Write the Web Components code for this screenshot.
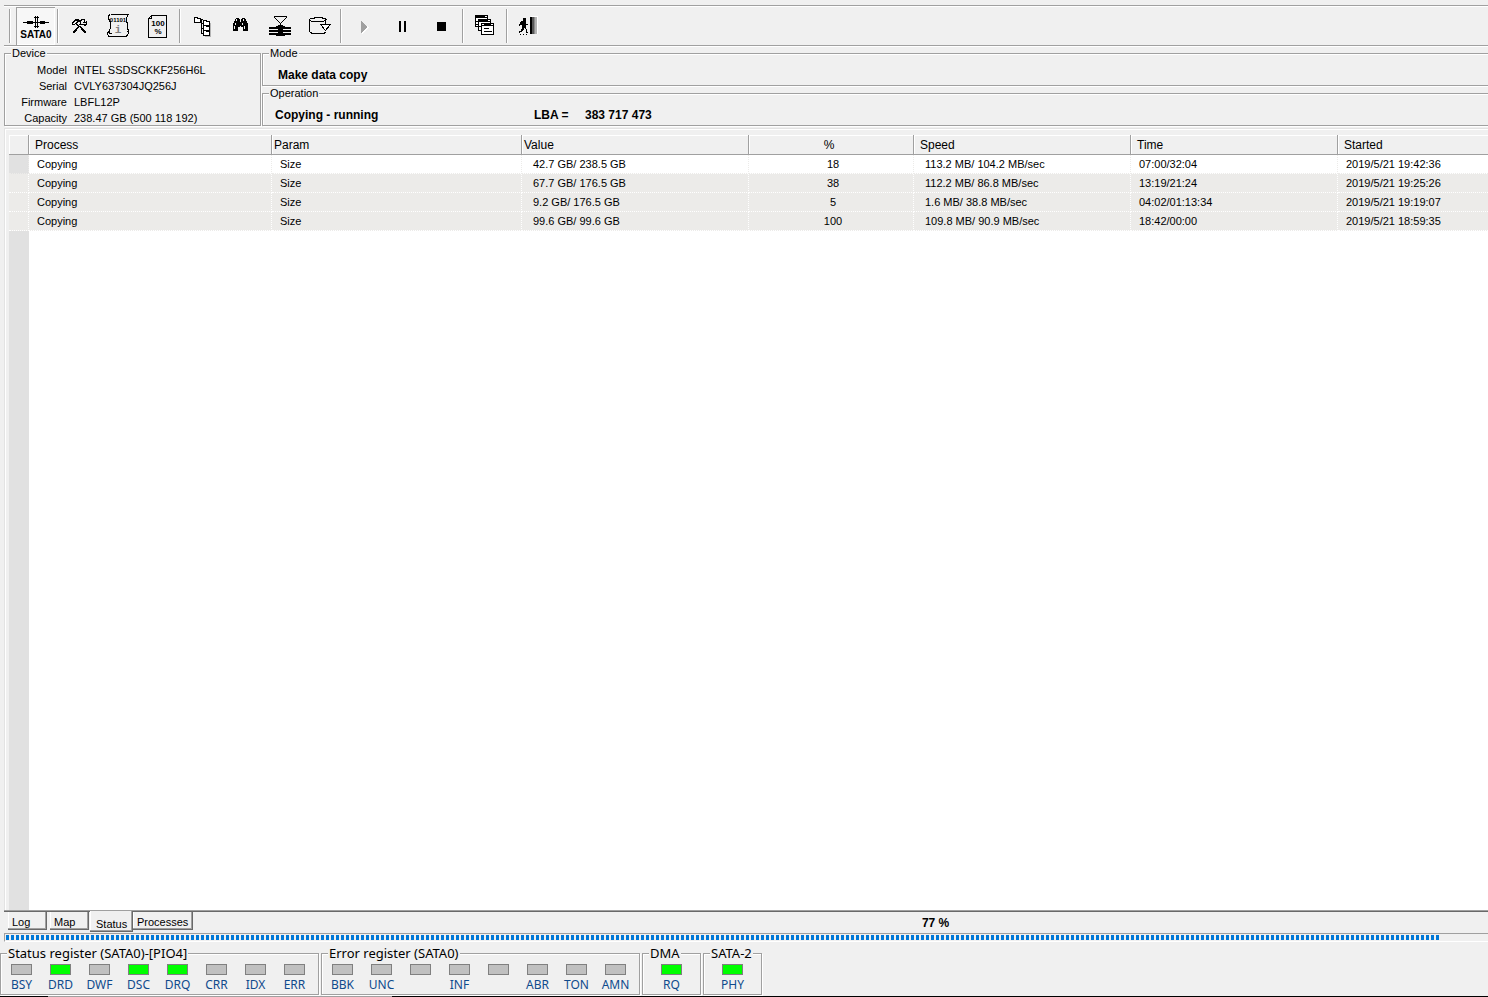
<!DOCTYPE html>
<html lang="en">
<head>
<meta charset="utf-8">
<title>Disk utility - Make data copy</title>
<style>
  html, body { margin: 0; height: 100%; }
  body {
    --face: #f0f0f0; --shade: #a0a0a0; --dark: #696969; --light: #ffffff;
    --ui: "Liberation Sans", Arial, sans-serif;
    --reg: "Noto Sans", "Open Sans", sans-serif;
    background: var(--face); color: #000; font: 11px/16px var(--ui); overflow: hidden;
  }
</style>
</head>
<body>
<disk-app></disk-app>
<script>
const define = (name, html, setup) => customElements.define(name, class extends HTMLElement {
  connectedCallback() {
    if (this.shadowRoot) return;
    const t = document.createElement('template');
    t.innerHTML = html;
    this.attachShadow({ mode: 'open' }).appendChild(t.content.cloneNode(true));
    if (setup) setup(this, this.shadowRoot);
  }
});

/* A small folder outline, 7 x 6 pixels, with its corner at x, y */
const folder = (x, y) => `<path fill="#fff" d="M${x + 1} ${y + 1}h5v4h-5z"/>
  <path d="M${x} ${y}h4v1h-4zM${x} ${y}h1v6h-1zM${x + 3} ${y + 1}h4v1h-4zM${x + 6} ${y + 1}h1v5h-1zM${x} ${y + 5}h7v1h-7z"/>`;

/* Toolbar icons, drawn on a 39 x 36 pixel button face */
const icons = {
  sata: ['16 8', `<path d="M23 22h26v1H23zM27 21h6v3h-6zM25 22h1v1h-1zM33 22h7v1h-7zM40 21h5v3h-5zM35 16h1v12h-1zM37 16h1v12h-1zM34 17h5v1h-5zM34 26h5v1h-5z"/>
    <text x="36" y="38" text-anchor="middle" font-size="10" font-weight="bold">SATA0</text>`],
  tools: ['60 8', `<path d="M75 19h4v1h-4zM74 20h6v1h-6zM73 21h2v1h-2zM77 21h3v1h-3zM72 22h2v1h-2zM76 22h2v1h-2zM72 23h1v2h-1zM75 23h2v1h-2zM73 24h2v1h-2zM76 24h2v1h-2zM77 25h2v1h-2zM81 19h4v1h-4zM80 20h2v1h-2zM84 20h1v2h-1zM80 21h1v3h-1zM83 22h4v1h-4zM86 21h1v4h-1zM81 24h5v1h-5zM79 24h3v1h-3zM84 25h2v1h-2zM78 26h3v1h-3zM77 27h2v1h-2zM80 27h2v1h-2zM76 28h2v1h-2zM81 28h2v1h-2zM75 29h2v1h-2zM81 29h3v1h-3zM74 30h3v1h-3zM82 30h3v1h-3zM73 31h3v1h-3zM83 31h3v1h-3zM73 32h2v1h-2zM84 32h2v1h-2z"/>`],
  info: ['99 8', `<path fill="none" stroke="#000" d="M110.500 14.500H128M128.500 14.500l-2 3v3l1 4v4l1 2v3l-2 2.500H108.500l-1-2v-2h2M110.500 14.500l-2 1v3l2 4v5l-1 3v2.500l2 1M107.500 31.500h2.500M126.500 31.500h2"/>
    <text x="118" y="22" text-anchor="middle" font-size="6" font-weight="bold">01101</text>
    <text x="118" y="33" text-anchor="middle" font-size="11" font-weight="bold" fill="#808080" font-family="Liberation Mono, monospace">i</text>`],
  percent: ['138 8', `<path fill="none" stroke="#000" d="M151.500 15.500h15v22h-18v-19zM148 18.500h3.500V15"/>
    <text x="158" y="26" text-anchor="middle" font-size="8" font-weight="bold">100</text>
    <text x="158" y="34" text-anchor="middle" font-size="8" font-weight="bold">%</text>`],
  tree: ['182 8', `<path fill="#b4b4b4" d="M210 23h1v14h-1zM205 36h6v1h-6z"/>${folder(194, 17)}${folder(203, 20)}${folder(203, 25)}${folder(203, 30)}
    <path d="M201 19h2v1h-2zM201 20h1v14h-1zM201 23h2v1h-2zM201 28h2v1h-2zM201 33h2v1h-2z"/>`],
  find: ['221 8', `<path d="M236 18h3v1h-3zM242 18h3v1h-3zM235 19h5v2h-5zM241 19h5v2h-5zM234 21h6v2h-6zM241 21h6v2h-6zM240 22h1v4h-1zM233 23h7v4h-7zM241 23h7v4h-7zM233 27h5v4h-5zM243 27h5v4h-5z"/>
    <path fill="#f0f0f0" d="M236 19h1v2h-1zM235 23h1v2h-1zM234 26h1v3h-1zM243 19h1v2h-1zM242 23h1v2h-1zM244 26h1v3h-1z"/>`],
  filter: ['260 8', `<path d="M274 16h13v1h-13zM274 17h1v1h-1zM286 17h1v1h-1zM275 18h1v1h-1zM285 18h1v1h-1zM276 19h1v1h-1zM284 19h1v1h-1zM277 20h1v1h-1zM283 20h1v1h-1zM278 21h1v1h-1zM282 21h1v1h-1zM279 22h1v1h-1zM281 22h1v1h-1zM280 23h1v2h-1zM278 25h5v1h-5zM276 26h9v1h-9zM269 27h22v2h-22zM278 29h5v1h-5zM269 30h22v2h-22zM278 32h5v1h-5zM269 33h22v2h-22zM276 35h9v1h-9z"/>`],
  disk: ['299 8', `<path fill="none" stroke="#000" d="M309.500 19.500l2-1.500h3l1-.500h6l1 .500h2l1.500 1.500-2 1.500h-2l-1 .500h-6l-1-.500h-3zM309.500 19.500v12l2 1.500h3l1 .500h6l1-.500h2l1-1M325.500 19.500v5"/>
    <path fill="#fff" stroke="#000" d="M320.500 24.500h10l-5 6z"/>`],
  play: ['343 8', `<path fill="#fff" d="M362 22l7 5.500-7 6.500z"/><path fill="#a0a0a0" d="M361 21h1v12h-1zM362 22h1v10h-1zM363 23h1v8h-1zM364 24h1v6h-1zM365 25h1v4h-1zM366 26h1v2h-1z"/>`],
  pause: ['382 8', `<path d="M399 21h2v11h-2zM404 21h2v11h-2z"/>`],
  stop: ['421 8', `<path d="M437 22h9v9h-9z"/>`],
  windows: ['465 8', `<path fill="#fff" stroke="#000" d="M475.500 15.500h12v11h-12z"/><path d="M475 15h13v3h-13zM476 21h2v1h-2zM476 24h2v1h-2z"/>
    <path fill="#fff" stroke="#000" d="M478.500 19.500h12v11h-12z"/><path d="M478 19h13v3h-13zM479 26h2v1h-2z"/>
    <path fill="#fff" stroke="#000" d="M481.500 23.500h12v11h-12z"/><path d="M481 23h13v3h-13zM484 28h5v1h-5zM484 31h8v1h-8z"/>
    <path fill="#fff" d="M485 16h2v1h-2zM488 20h2v1h-2zM482 24h2v1h-2zM491 24h2v1h-2z"/>`],
  exit: ['509 8', `<path d="M523 18h3v3h-3zM521 21h5v2h-5zM520 22h2v3h-2zM519 24h1v2h-1zM522 22h4v6h-4zM526 24h2v1h-2zM522 28h2v2h-2zM525 27h1v2h-1zM526 29h1v3h-1zM526 32h2v1h-2zM521 29h2v2h-2zM520 31h2v1h-2zM519 31h1v2h-1zM520 34h1v1h-1zM523 34h1v1h-1zM526 34h1v1h-1z"/>
    <path fill="#fff" d="M531 16h7v18h-7z"/><path d="M530 17h2v17h-2z"/><path fill="#585858" d="M532 17h2v17h-2z"/><path fill="#8c8c8c" d="M534 17h1v17h-1z"/><path fill="#b4b4b4" d="M535 17h2v17h-2z"/>`]
};

define('tool-button', `<style>
  :host { display: block; width: 39px; }
  button { display: block; width: 100%; height: 38px; padding: 0; border: 0; background: none; color: inherit; }
  svg { display: block; margin: 0; width: 39px; height: 36px; font-family: var(--ui); }
  :host([pressed]) button { background: #f7f7f7; box-shadow: inset 1px 1px var(--shade), inset -1px -1px var(--light); }
</style><button type="button"></button>`, (el, root) => {
  const [origin, art] = icons[el.getAttribute('icon')];
  const b = root.querySelector('button');
  b.setAttribute('aria-label', el.getAttribute('label'));
  b.disabled = el.hasAttribute('disabled');
  b.innerHTML = `<svg viewBox="${origin} 39 36" shape-rendering="crispEdges" aria-hidden="true">${art}</svg>`;
});

define('tool-separator', `<style>
  :host { display: block; flex: none; width: 1px; height: 34px; margin: 2px 2px 0 2px; background: var(--shade); box-shadow: 1px 0 var(--light); }
</style>`);

define('tool-bar', `<style>
  :host { display: flex; height: 38px; margin: 5px 0 0 4px; padding: 1px 0 0 3px; border-top: 1px solid var(--shade); border-bottom: 1px solid var(--shade); box-shadow: inset 0 1px var(--light), 0 1px var(--light); }
  ::slotted(tool-separator:first-child) { margin-right: 6px !important; }
</style><slot></slot>`);

define('group-box', `<style>
  :host { display: block; min-width: 0; }
  fieldset { box-sizing: border-box; min-width: 0; height: 100%; margin: 0; padding: 0; border: 1px solid var(--shade); box-shadow: inset 1px 1px var(--light), 1px 1px var(--light); }
  legend { margin-left: 6px; padding: 0 1px; line-height: 13px; background: var(--face); }
  :host([open]) fieldset { border-right: 0; }
  :host([register]) legend { font: 13px/15px var(--reg); }
</style><fieldset><legend></legend><slot></slot></fieldset>`, (el, root) => {
  root.querySelector('legend').textContent = el.getAttribute('label');
});

define('device-info', `<style>
  :host { display: block; height: 65px; }
  dl { display: grid; grid-template-columns: 62px 1fr; column-gap: 7px; margin: 0; padding-top: 2px; line-height: 16px; white-space: nowrap; }
  dt { text-align: right; } dd { margin: 0; }
</style><dl>
  <dt>Model</dt><dd>INTEL SSDSCKKF256H6L</dd>
  <dt>Serial</dt><dd>CVLY637304JQ256J</dd>
  <dt>Firmware</dt><dd>LBFL12P</dd>
  <dt>Capacity</dt><dd>238.47 GB (500 118 192)</dd>
</dl>`);

define('process-table', `<style>
  :host { display: block; flex: 1; min-height: 0; margin: 2px 0 0 4px; padding: 6px 0 0 4px; border: solid #e3e3e3; border-width: 1px 0 0 1px; box-shadow: inset 1px 1px var(--light); }
  .sheet { height: 100%; overflow: hidden; background: linear-gradient(to right, #e1e1e1 20px, #fff 20px); }
  table { width: 100%; table-layout: fixed; border-collapse: separate; border-spacing: 0; }
  th, td { box-sizing: border-box; height: 19px; padding: 0; text-align: left; white-space: nowrap; overflow: hidden; }
  th { height: 20px; font: 12px/18px var(--ui); background: var(--face); border-bottom: 1px solid var(--shade); border-right: 1px solid var(--shade); box-shadow: inset 1px 1px var(--light); padding-left: 2px; padding-top: 1px; }
  td { line-height: 18px; border-bottom: 1px dotted #fff; border-right: 1px dotted #fff; padding-left: 8px; }
  th:last-child, td:last-child { border-right: 0; }
  th.wide { padding-left: 6px; } td.value, td.speed { padding-left: 11px; }
  th.num { text-align: center; padding-right: 6px; } td.num { text-align: center; padding: 0 0 0 4px; }
  tbody tr { background: #ecebe9; }
  tbody tr:first-child { background: #fff; }
  tbody tr:first-child td { border-color: #ecebe9; }
  tbody tr:first-child td:first-child { background: #e1e1e1; }
</style><div class="sheet"><table>
  <colgroup><col style="width:20px"><col style="width:243px"><col style="width:250px"><col style="width:227px"><col style="width:165px"><col style="width:217px"><col style="width:207px"><col></colgroup>
  <thead><tr><th></th><th class="wide">Process</th><th>Param</th><th>Value</th><th class="num">%</th><th class="wide">Speed</th><th class="wide">Time</th><th class="wide">Started</th></tr></thead>
  <tbody></tbody></table></div>`, (el, root) => {
  const rows = [
    ['42.7 GB/ 238.5 GB', '18', '113.2 MB/ 104.2 MB/sec', '07:00/32:04', '2019/5/21 19:42:36'],
    ['67.7 GB/ 176.5 GB', '38', '112.2 MB/ 86.8 MB/sec', '13:19/21:24', '2019/5/21 19:25:26'],
    ['9.2 GB/ 176.5 GB', '5', '1.6 MB/ 38.8 MB/sec', '04:02/01:13:34', '2019/5/21 19:19:07'],
    ['99.6 GB/ 99.6 GB', '100', '109.8 MB/ 90.9 MB/sec', '18:42/00:00', '2019/5/21 18:59:35']
  ];
  root.querySelector('tbody').innerHTML = rows.map(([v, p, s, t, d]) =>
    `<tr><td></td><td>Copying</td><td>Size</td><td class="value">${v}</td><td class="num">${p}</td><td class="speed">${s}</td><td>${t}</td><td>${d}</td></tr>`).join('');
});

define('tab-strip', `<style>
  :host { display: flex; align-items: flex-start; height: 20px; margin-left: 4px; border-top: 1px solid var(--shade); box-shadow: inset 0 1px var(--dark); }
  [role=tablist] { display: flex; align-items: flex-start; gap: 3px; padding-left: 4px; }
  button { box-sizing: border-box; width: 39px; height: 19px; margin: 0; padding: 1px 4px 0; border: 0; background: var(--face); font: 11px/16px var(--ui); color: inherit; text-align: left; box-shadow: inset -1px -1px var(--dark), inset -2px -2px var(--shade), inset 1px 0 var(--light); border-top: 1px solid var(--dark); }
  .processes { width: 60px; margin-left: -3px; }
  button[aria-selected=true] { width: 43px; height: 21px; padding: 5px 5px 0 6px; border-top: 0; line-height: 15px; margin-left: -2px; }
  .before { flex: 23; } .after { flex: 17; }
  strong { padding-top: 4px; font-size: 12px; }
</style><div role="tablist">
  <button role="tab" aria-selected="false">Log</button><button role="tab" aria-selected="false">Map</button><button role="tab" aria-selected="true">Status</button><button role="tab" aria-selected="false" class="processes">Processes</button>
</div><span class="before"></span><strong>77 %</strong><span class="after"></span>`);

define('copy-progress', `<style>
  :host { display: block; margin: 2px 0 0 4px; border: solid var(--shade); border-width: 1px 0 0 1px; border-bottom: 1px solid var(--light); height: 6px; padding: 1px 0 0 1px; }
  div { height: 5px; margin-right: 47px; background: repeating-linear-gradient(to right, #0078d7 0 3px, transparent 3px 5px); }
</style><div role="progressbar" aria-valuenow="77" aria-label="Copy progress"></div>`);

define('status-led', `<style>
  :host { display: block; width: 39px; text-align: center; font: 12px/15px var(--reg); color: #0f4a8c; }
  i { display: block; box-sizing: border-box; width: 21px; height: 11px; margin: 0 auto 2px; background: #c0c0c0; border: 1px solid #808080; }
  :host([on]) i { background: #00ff00; }
  span { display: block; height: 15px; }
</style><i></i><span><slot></slot></span>`);

define('register-bar', `<style>
  :host { display: flex; gap: 2px; height: 49px; padding: 5px 0 1px; }
  .leds { display: flex; padding: 3px 4px 0 1px; }
  .leds.one { padding: 3px 9px 0; }
</style>
<group-box register label="Status register (SATA0)-[PIO4]"><div class="leds"><status-led>BSY</status-led><status-led on>DRD</status-led><status-led>DWF</status-led><status-led on>DSC</status-led><status-led on>DRQ</status-led><status-led>CRR</status-led><status-led>IDX</status-led><status-led>ERR</status-led></div></group-box>
<group-box register label="Error register (SATA0)"><div class="leds"><status-led>BBK</status-led><status-led>UNC</status-led><status-led></status-led><status-led>INF</status-led><status-led></status-led><status-led>ABR</status-led><status-led>TON</status-led><status-led>AMN</status-led></div></group-box>
<group-box register label="DMA"><div class="leds one"><status-led on>RQ</status-led></div></group-box>
<group-box register label="SATA-2"><div class="leds one"><status-led on>PHY</status-led></div></group-box>`);

define('disk-app', `<style>
  :host { display: flex; flex-direction: column; height: 100vh; }
  .summary { display: grid; grid-template-columns: 257px 1fr; gap: 1px; margin: 1px 0 0 4px; }
  .right { display: grid; grid-template-rows: 39px 39px; gap: 1px; }
  .line { display: flex; font: bold 12px/16px var(--ui); padding: 7px 0 0 15px; }
  .op { padding-left: 12px; }
  .op b:first-child { width: 259px; } .op b:nth-child(2) { width: 51px; }
  register-bar { margin-top: -1px; }
  footer { height: 1px; background: linear-gradient(to right, #000 48px, #a0a0a0 48px 392px, #000 392px); }
</style>
<tool-bar>
  <tool-separator></tool-separator>
  <tool-button icon="sata" label="SATA0 port" pressed></tool-button>
  <tool-separator></tool-separator>
  <tool-button icon="tools" label="Settings"></tool-button>
  <tool-button icon="info" label="Device information"></tool-button>
  <tool-button icon="percent" label="Statistics"></tool-button>
  <tool-separator></tool-separator>
  <tool-button icon="tree" label="Structure"></tool-button>
  <tool-button icon="find" label="Find"></tool-button>
  <tool-button icon="filter" label="Sector view"></tool-button>
  <tool-button icon="disk" label="Copy disk"></tool-button>
  <tool-separator></tool-separator>
  <tool-button icon="play" label="Start" disabled></tool-button>
  <tool-button icon="pause" label="Pause"></tool-button>
  <tool-button icon="stop" label="Stop"></tool-button>
  <tool-separator></tool-separator>
  <tool-button icon="windows" label="Windows"></tool-button>
  <tool-separator></tool-separator>
  <tool-button icon="exit" label="Exit"></tool-button>
</tool-bar>
<div class="summary">
  <group-box label="Device"><device-info></device-info></group-box>
  <div class="right">
    <group-box open label="Mode"><div class="line"><b>Make data copy</b></div></group-box>
    <group-box open label="Operation"><div class="line op"><b>Copying - running</b><b>LBA =</b><b>383 717 473</b></div></group-box>
  </div>
</div>
<process-table></process-table>
<tab-strip></tab-strip>
<copy-progress></copy-progress>
<register-bar></register-bar>
<footer></footer>`);
</script>
</body>
</html>
